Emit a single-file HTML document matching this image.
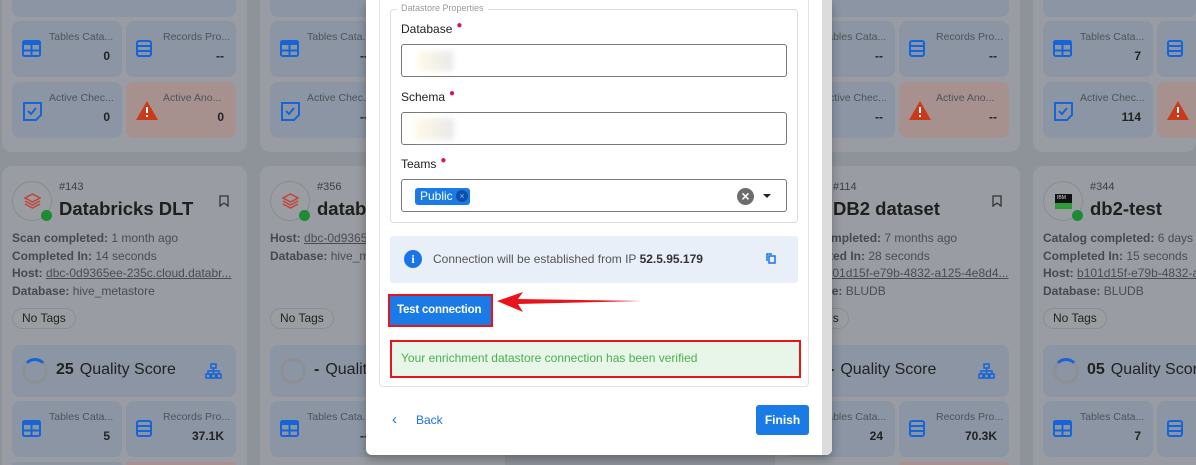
<!DOCTYPE html>
<html><head><meta charset="utf-8">
<style>
*{box-sizing:border-box;margin:0;padding:0}
html,body{width:1196px;height:465px;overflow:hidden}
body{background:#8e939a;font-family:"Liberation Sans",sans-serif;position:relative}
.card{position:absolute;width:245px;background:#999ca2;border-radius:10px}
.t{position:absolute;width:110px;height:56px;background:#8b95a4;border-radius:8px}
.t.r{background:#a6918f}
.t.c{height:3px;border-radius:8px 8px 0 0}
.t svg{position:absolute;left:10px;top:19px}
.lb{position:absolute;left:37px;top:10px;font-size:10.5px;color:#4e535a;white-space:nowrap}
.v{position:absolute;right:12px;top:28px;font-size:12px;font-weight:bold;color:#222}
.q{position:absolute;width:224px;height:52px;background:#8b95a4;border-radius:8px}
.q .ring{position:absolute;left:10px;top:13px;width:26px;height:26px;border-radius:50%;border:3px solid #8e8f93}
.q .s{position:absolute;left:44px;top:16px;font-size:16px;color:#222}
.q .s b{margin-right:6px}
.av{position:absolute;width:40px;height:40px;border-radius:50%;border:1px solid #8a8c90;background:#9a9da2}
.dot{position:absolute;width:11px;height:11px;border-radius:50%;background:#1e8a36}
.num{position:absolute;font-size:11px;color:#3c3f44}
.tt{position:absolute;font-size:18.5px;font-weight:bold;color:#1f1f1f;white-space:nowrap}
.ln{position:absolute;font-size:12px;color:#4a4d52;white-space:nowrap}
.ln b{color:#46494e}
.ln u{color:#4a4d52}
.tag{position:absolute;height:21px;border:1px solid #8a8e95;border-radius:11px;font-size:12px;color:#222;padding:2px 9px;background:#9a9da2}
.modal{position:absolute;left:366px;top:0;width:466px;height:455px;background:#fff;border-radius:0 0 6px 6px;box-shadow:0 4px 10px rgba(0,0,0,.3)}
.sb{position:absolute;right:0;top:0;width:10px;height:100%;background:#dcdcdc;border-radius:0 0 6px 0}
.lab{position:absolute;font-size:12px;color:#222}
.lab i{color:#e0144c;font-style:normal;font-size:10px;position:relative;top:-5px;margin-left:4px}
.inp{position:absolute;left:401px;width:386px;height:33px;border:1px solid #777;border-radius:3px;background:#fff}
.blur{position:absolute;left:15px;top:6px;width:36px;height:20px;background:linear-gradient(90deg,#fffbe8,#e8e8e8);filter:blur(3px)}
</style></head><body>

<div class="card" style="left:2px;top:0;height:152px;border-radius:0 0 10px 10px"></div>
<div class="q" style="left:12px;top:0;height:17px;border-radius:0 0 8px 8px"></div>
<div class="card" style="left:260px;top:0;height:152px;border-radius:0 0 10px 10px"></div>
<div class="q" style="left:270px;top:0;height:17px;border-radius:0 0 8px 8px"></div>
<div class="card" style="left:775px;top:0;height:152px;border-radius:0 0 10px 10px"></div>
<div class="q" style="left:785px;top:0;height:17px;border-radius:0 0 8px 8px"></div>
<div class="card" style="left:1033px;top:0;height:152px;border-radius:0 0 10px 10px;width:163px"></div>
<div class="q" style="left:1043px;top:0;height:17px;border-radius:0 0 8px 8px;width:153px"></div>

<div class="t" style="left:12px;top:21px"><svg width="19" height="17" viewBox="0 0 19 17"><rect x="1" y="1" width="17" height="15" rx="1.5" fill="none" stroke="#1565d8" stroke-width="2"/><rect x="1" y="1" width="17" height="4" fill="#1565d8"/><path d="M9.5 5v11M1 10.5h17" stroke="#1565d8" stroke-width="2"/></svg><div class="lb">Tables Cata...</div><div class="v">0</div></div>
<div class="t" style="left:126px;top:21px"><svg width="16" height="17" viewBox="0 0 16 17"><rect x="1" y="1" width="14" height="15" rx="2" fill="none" stroke="#1565d8" stroke-width="2"/><path d="M1 6h14M1 11h14" stroke="#1565d8" stroke-width="2"/></svg><div class="lb">Records Pro...</div><div class="v">--</div></div>
<div class="t" style="left:12px;top:82px"><svg width="21" height="21" viewBox="0 0 21 21"><path d="M2 2h17v12l-5 5H2z" fill="none" stroke="#1565d8" stroke-width="2"/><path d="M6 10l3 3 5-6" fill="none" stroke="#1565d8" stroke-width="2"/></svg><div class="lb">Active Chec...</div><div class="v">0</div></div>
<div class="t r" style="left:126px;top:82px"><svg width="22" height="19" viewBox="0 0 22 19"><path d="M11 0L22 19H0z" fill="#c9391a"/><path d="M11 6v6M11 14v2" stroke="#fff" stroke-width="2"/></svg><div class="lb">Active Ano...</div><div class="v">0</div></div>

<div class="t" style="left:270px;top:21px"><svg width="19" height="17" viewBox="0 0 19 17"><rect x="1" y="1" width="17" height="15" rx="1.5" fill="none" stroke="#1565d8" stroke-width="2"/><rect x="1" y="1" width="17" height="4" fill="#1565d8"/><path d="M9.5 5v11M1 10.5h17" stroke="#1565d8" stroke-width="2"/></svg><div class="lb">Tables Cata...</div><div class="v">--</div></div>
<div class="t" style="left:270px;top:82px"><svg width="21" height="21" viewBox="0 0 21 21"><path d="M2 2h17v12l-5 5H2z" fill="none" stroke="#1565d8" stroke-width="2"/><path d="M6 10l3 3 5-6" fill="none" stroke="#1565d8" stroke-width="2"/></svg><div class="lb">Active Chec...</div><div class="v">--</div></div>

<div class="t" style="left:785px;top:21px"><div class="lb">Tables Cata...</div><div class="v">--</div></div>
<div class="t" style="left:899px;top:21px"><svg width="16" height="17" viewBox="0 0 16 17"><rect x="1" y="1" width="14" height="15" rx="2" fill="none" stroke="#1565d8" stroke-width="2"/><path d="M1 6h14M1 11h14" stroke="#1565d8" stroke-width="2"/></svg><div class="lb">Records Pro...</div><div class="v">--</div></div>
<div class="t" style="left:785px;top:82px"><div class="lb">Active Chec...</div><div class="v">--</div></div>
<div class="t r" style="left:899px;top:82px"><svg width="22" height="19" viewBox="0 0 22 19"><path d="M11 0L22 19H0z" fill="#c9391a"/><path d="M11 6v6M11 14v2" stroke="#fff" stroke-width="2"/></svg><div class="lb">Active Ano...</div><div class="v">--</div></div>

<div class="t" style="left:1043px;top:21px"><svg width="19" height="17" viewBox="0 0 19 17"><rect x="1" y="1" width="17" height="15" rx="1.5" fill="none" stroke="#1565d8" stroke-width="2"/><rect x="1" y="1" width="17" height="4" fill="#1565d8"/><path d="M9.5 5v11M1 10.5h17" stroke="#1565d8" stroke-width="2"/></svg><div class="lb">Tables Cata...</div><div class="v">7</div></div>
<div class="t" style="left:1157px;top:21px;width:39px;border-radius:8px 0 0 8px"><svg width="16" height="17" viewBox="0 0 16 17"><rect x="1" y="1" width="14" height="15" rx="2" fill="none" stroke="#1565d8" stroke-width="2"/><path d="M1 6h14M1 11h14" stroke="#1565d8" stroke-width="2"/></svg></div>
<div class="t" style="left:1043px;top:82px"><svg width="21" height="21" viewBox="0 0 21 21"><path d="M2 2h17v12l-5 5H2z" fill="none" stroke="#1565d8" stroke-width="2"/><path d="M6 10l3 3 5-6" fill="none" stroke="#1565d8" stroke-width="2"/></svg><div class="lb">Active Chec...</div><div class="v">114</div></div>
<div class="t r" style="left:1157px;top:82px;width:39px;border-radius:8px 0 0 8px"><svg width="22" height="19" viewBox="0 0 22 19"><path d="M11 0L22 19H0z" fill="#c9391a"/><path d="M11 6v6M11 14v2" stroke="#fff" stroke-width="2"/></svg></div>

<div class="card" style="left:2px;top:166px;height:299px;border-radius:10px 10px 0 0"></div>
<div class="card" style="left:260px;top:166px;height:299px;border-radius:10px 10px 0 0"></div>
<div class="card" style="left:775px;top:166px;height:299px;border-radius:10px 10px 0 0"></div>
<div class="card" style="left:1033px;top:166px;height:299px;width:163px;border-radius:10px 0 0 0"></div>

<!-- A -->
<div class="av" style="left:12px;top:181px"><svg style="position:absolute;left:11px;top:11px" width="17" height="16" viewBox="0 0 17 16"><path d="M8.5 1L16 5 8.5 9 1 5z M1 8l7.5 4L16 8 M1 11l7.5 4L16 11" fill="none" stroke="#c2453a" stroke-width="1.5"/></svg></div>
<div class="dot" style="left:41px;top:210px"></div>
<div class="num" style="left:59px;top:181px">#143</div>
<div class="tt" style="left:59px;top:198px">Databricks DLT</div>
<svg style="position:absolute;left:219px;top:195px" width="10" height="12" viewBox="0 0 10 12"><path d="M1 1h8v10L5 8 1 11z" fill="none" stroke="#333" stroke-width="1.3"/></svg>
<div class="ln" style="left:12px;top:231px"><b>Scan completed:</b> 1 month ago</div>
<div class="ln" style="left:12px;top:249px"><b>Completed In:</b> 14 seconds</div>
<div class="ln" style="left:12px;top:266px"><b>Host:</b> <u>dbc-0d9365ee-235c.cloud.databr...</u></div>
<div class="ln" style="left:12px;top:284px"><b>Database:</b> hive_metastore</div>
<div class="tag" style="left:12px;top:308px">No Tags</div>
<div class="q" style="left:12px;top:345px"><div class="ring" style="border-top-color:#1565d8"></div><div class="s"><b>25</b>Quality Score</div><svg style="position:absolute;right:14px;top:18px" width="17" height="16" viewBox="0 0 17 16"><path d="M6 1h5v4H6zM1 11h4v4H1zM6.5 11h4v4h-4zM12 11h4v4h-4zM8.5 5v6M3 11V8h11v3" fill="none" stroke="#1565d8" stroke-width="1.5"/></svg></div>
<div class="t" style="left:12px;top:401px"><svg width="19" height="17" viewBox="0 0 19 17"><rect x="1" y="1" width="17" height="15" rx="1.5" fill="none" stroke="#1565d8" stroke-width="2"/><rect x="1" y="1" width="17" height="4" fill="#1565d8"/><path d="M9.5 5v11M1 10.5h17" stroke="#1565d8" stroke-width="2"/></svg><div class="lb">Tables Cata...</div><div class="v">5</div></div>
<div class="t" style="left:126px;top:401px"><svg width="16" height="17" viewBox="0 0 16 17"><rect x="1" y="1" width="14" height="15" rx="2" fill="none" stroke="#1565d8" stroke-width="2"/><path d="M1 6h14M1 11h14" stroke="#1565d8" stroke-width="2"/></svg><div class="lb">Records Pro...</div><div class="v">37.1K</div></div>
<div class="t c" style="left:12px;top:462px"></div><div class="t r c" style="left:126px;top:462px"></div>

<!-- B -->
<div class="av" style="left:270px;top:181px"><svg style="position:absolute;left:11px;top:11px" width="17" height="16" viewBox="0 0 17 16"><path d="M8.5 1L16 5 8.5 9 1 5z M1 8l7.5 4L16 8 M1 11l7.5 4L16 11" fill="none" stroke="#c2453a" stroke-width="1.5"/></svg></div>
<div class="dot" style="left:299px;top:210px"></div>
<div class="num" style="left:317px;top:181px">#356</div>
<div class="tt" style="left:317px;top:198px">databricks</div>
<div class="ln" style="left:270px;top:231px"><b>Host:</b> <u>dbc-0d9365ee</u></div>
<div class="ln" style="left:270px;top:249px"><b>Database:</b> hive_metastore</div>
<div class="tag" style="left:270px;top:308px">No Tags</div>
<div class="q" style="left:270px;top:345px"><div class="ring"></div><div class="s"><b>-</b>Quality Score</div></div>
<div class="t" style="left:270px;top:401px"><svg width="19" height="17" viewBox="0 0 19 17"><rect x="1" y="1" width="17" height="15" rx="1.5" fill="none" stroke="#1565d8" stroke-width="2"/><rect x="1" y="1" width="17" height="4" fill="#1565d8"/><path d="M9.5 5v11M1 10.5h17" stroke="#1565d8" stroke-width="2"/></svg><div class="lb">Tables Cata...</div><div class="v">--</div></div>

<!-- D -->
<div class="num" style="left:833px;top:181px">#114</div>
<div class="tt" style="left:833px;top:198px">DB2 dataset</div>
<svg style="position:absolute;left:992px;top:195px" width="10" height="12" viewBox="0 0 10 12"><path d="M1 1h8v10L5 8 1 11z" fill="none" stroke="#333" stroke-width="1.3"/></svg>
<div class="ln" style="left:785px;top:231px"><b>Scan completed:</b> 7 months ago</div>
<div class="ln" style="left:785px;top:249px"><b>Completed In:</b> 28 seconds</div>
<div class="ln" style="left:785px;top:266px"><b>Host:</b> <u>b101d15f-e79b-4832-a125-4e8d4...</u></div>
<div class="ln" style="left:785px;top:284px"><b>Database:</b> BLUDB</div>
<div class="tag" style="left:785px;top:308px">No Tags</div>
<div class="q" style="left:785px;top:345px"><div class="ring"></div><div class="s"><b>-</b>Quality Score</div><svg style="position:absolute;right:14px;top:18px" width="17" height="16" viewBox="0 0 17 16"><path d="M6 1h5v4H6zM1 11h4v4H1zM6.5 11h4v4h-4zM12 11h4v4h-4zM8.5 5v6M3 11V8h11v3" fill="none" stroke="#1565d8" stroke-width="1.5"/></svg></div>
<div class="t" style="left:785px;top:401px"><div class="lb">Tables Cata...</div><div class="v">24</div></div>
<div class="t" style="left:899px;top:401px"><svg width="16" height="17" viewBox="0 0 16 17"><rect x="1" y="1" width="14" height="15" rx="2" fill="none" stroke="#1565d8" stroke-width="2"/><path d="M1 6h14M1 11h14" stroke="#1565d8" stroke-width="2"/></svg><div class="lb">Records Pro...</div><div class="v">70.3K</div></div>
<div class="t r c" style="left:899px;top:462px"></div>

<!-- E -->
<div class="av" style="left:1043px;top:181px"><div style="position:absolute;left:11px;top:12px;width:17px;height:15px;background:#111;border-bottom:6px solid #2f9a3a"><span style="position:absolute;left:2px;top:1px;font-size:5px;color:#ddd">IBM</span></div></div>
<div class="dot" style="left:1072px;top:210px"></div>
<div class="num" style="left:1090px;top:181px">#344</div>
<div class="tt" style="left:1090px;top:198px">db2-test</div>
<div class="ln" style="left:1043px;top:231px;width:153px;overflow:hidden"><b>Catalog completed:</b> 6 days ago</div>
<div class="ln" style="left:1043px;top:249px"><b>Completed In:</b> 15 seconds</div>
<div class="ln" style="left:1043px;top:266px;width:153px;overflow:hidden"><b>Host:</b> <u>b101d15f-e79b-4832-a125</u></div>
<div class="ln" style="left:1043px;top:284px"><b>Database:</b> BLUDB</div>
<div class="tag" style="left:1043px;top:308px">No Tags</div>
<div class="q" style="left:1043px;top:345px;width:153px;border-radius:8px 0 0 8px;overflow:hidden"><div class="ring" style="border-top-color:#1565d8"></div><div class="s" style="white-space:nowrap"><b>05</b>Quality Score</div></div>
<div class="t" style="left:1043px;top:401px"><svg width="19" height="17" viewBox="0 0 19 17"><rect x="1" y="1" width="17" height="15" rx="1.5" fill="none" stroke="#1565d8" stroke-width="2"/><rect x="1" y="1" width="17" height="4" fill="#1565d8"/><path d="M9.5 5v11M1 10.5h17" stroke="#1565d8" stroke-width="2"/></svg><div class="lb">Tables Cata...</div><div class="v">7</div></div>
<div class="t" style="left:1157px;top:401px;width:39px;border-radius:8px 0 0 8px"><svg width="16" height="17" viewBox="0 0 16 17"><rect x="1" y="1" width="14" height="15" rx="2" fill="none" stroke="#1565d8" stroke-width="2"/><path d="M1 6h14M1 11h14" stroke="#1565d8" stroke-width="2"/></svg></div>

<!-- MODAL -->
<div class="modal"><div class="sb"></div></div>
<div style="position:absolute;left:379px;top:0;width:430px;height:387px;border:1px solid #e3e3e3;border-top:none;border-radius:0 0 4px 4px"></div>
<div style="position:absolute;left:390px;top:9px;width:408px;height:214px;border:1px solid #ddd;border-radius:4px"></div>
<div style="position:absolute;left:397px;top:3px;background:#fff;padding:0 4px;font-size:9px;color:#999">Datastore Properties</div>
<div class="lab" style="left:401px;top:22px">Database<i>●</i></div>
<div class="inp" style="top:44px"><div class="blur"></div></div>
<div class="lab" style="left:401px;top:90px">Schema<i>●</i></div>
<div class="inp" style="top:112px"><div class="blur" style="left:12px;top:5px;width:40px;height:22px"></div></div>
<div class="lab" style="left:401px;top:157px">Teams<i>●</i></div>
<div class="inp" style="top:179px">
 <div style="position:absolute;left:13px;top:8px;width:55px;height:17px;background:#1a7ae6;border-radius:3px;color:#fff;font-size:12px;padding:1px 5px">Public<span style="position:absolute;right:2px;top:2px;width:12px;height:12px;border-radius:50%;background:#0d4fa8;color:#8ab6ef;font-size:9px;text-align:center;line-height:12px">×</span></div>
 <div style="position:absolute;left:335px;top:8px;width:17px;height:17px;border-radius:50%;background:#6d6d6d;color:#fff;font-size:14px;font-weight:bold;text-align:center;line-height:17px">×</div>
 <div style="position:absolute;left:361px;top:14px;width:0;height:0;border-left:4px solid transparent;border-right:4px solid transparent;border-top:4px solid #222"></div>
</div>
<div style="position:absolute;left:390px;top:236px;width:408px;height:47px;background:#e8eff9;border-radius:3px">
 <div style="position:absolute;left:14px;top:14px;width:18px;height:18px;border-radius:50%;background:#1a73e8;color:#fff;font-size:12px;font-weight:bold;text-align:center;line-height:18px;font-family:'Liberation Serif',serif">i</div>
 <div style="position:absolute;left:43px;top:16px;font-size:12px;color:#555">Connection will be established from IP <b style="color:#333">52.5.95.179</b></div>
 <svg style="position:absolute;left:376px;top:17px" width="10" height="11" viewBox="0 0 10 11"><rect x="3" y="3" width="6" height="7" fill="none" stroke="#1a73e8" stroke-width="1.5"/><path d="M1 8V1h5" fill="none" stroke="#1a73e8" stroke-width="1.5"/></svg>
</div>
<div style="position:absolute;left:388px;top:294px;width:105px;height:33px;border:2px solid #e8141c;background:#1a7ae6;box-shadow:inset 0 0 0 1px #1a7ae6"><div style="color:#fff;font-size:11.5px;font-weight:bold;position:absolute;left:7px;top:8px;white-space:nowrap;letter-spacing:-0.2px">Test connection</div></div>
<svg style="position:absolute;left:495px;top:290px" width="150" height="25" viewBox="0 0 150 25"><path d="M2 11L28 2 23 9 147 11 23 14 28 22z" fill="#e8141c"/></svg>
<div style="position:absolute;left:390px;top:340px;width:411px;height:38px;border:2px solid #e8141c;background:#e8f5e9"><div style="position:absolute;left:9px;top:9px;font-size:12px;color:#4caf50;white-space:nowrap">Your enrichment datastore connection has been verified</div></div>
<div style="position:absolute;left:392px;top:411px;font-size:15px;color:#1a73e8">‹</div>
<div style="position:absolute;left:416px;top:413px;font-size:12px;color:#1a73e8">Back</div>
<div style="position:absolute;left:756px;top:405px;width:53px;height:30px;background:#1a7ae6;border-radius:3px;color:#fff;font-size:12px;font-weight:bold;text-align:center;line-height:30px">Finish</div>
</body></html>
